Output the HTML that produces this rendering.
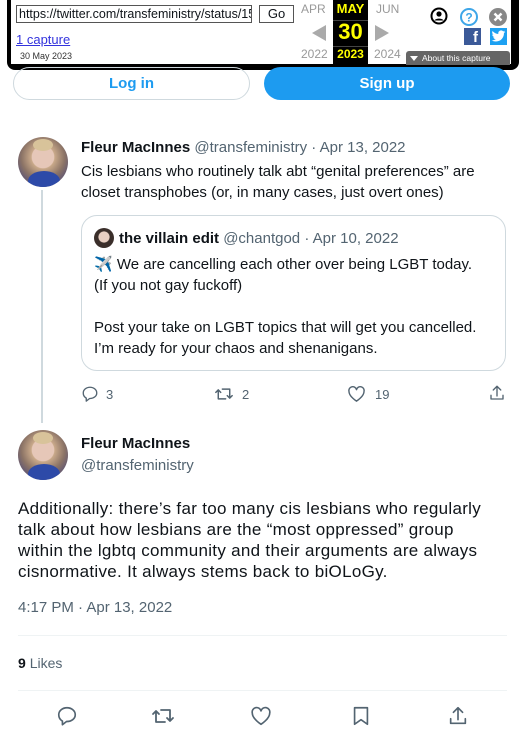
<!DOCTYPE html>
<html><head><meta charset="utf-8">
<style>
*{margin:0;padding:0;box-sizing:border-box}
body{width:525px;height:735px;background:#fff;font-family:"Liberation Sans",Arial,sans-serif;color:#0f1419;position:relative;overflow:hidden}
.a{position:absolute}
.g{color:#536471}
svg.i{position:absolute;fill:none;stroke:#536471;stroke-width:1.8;stroke-linecap:round;stroke-linejoin:round}
</style></head><body>

<div class="a" style="left:7px;top:-6px;width:512px;height:76px;background:#000;border-radius:0 0 8px 8px"></div>
<div class="a" style="left:11px;top:0;width:322px;height:64px;background:#fff"></div>
<div class="a" style="left:368px;top:0;width:143px;height:64px;background:#fff"></div>
<div class="a" style="left:333px;top:0;width:35px;height:64px;background:#000"></div>
<div class="a" style="left:16px;top:5px;width:236px;height:18px;border:1px solid #555;font-size:12.5px;line-height:16px;padding-left:2px;overflow:hidden;white-space:nowrap">https://twitter.com/transfeministry/status/15</div>
<div class="a" style="left:259px;top:5px;width:35px;height:18px;border:1px solid #555;font-size:13px;line-height:16px;text-align:center">Go</div>
<div class="a" style="left:16px;top:32px;font-size:13px;color:#3333dd;text-decoration:underline">1 capture</div>
<div class="a" style="left:20px;top:51px;font-size:9px;color:#333">30 May 2023</div>
<div class="a" style="left:301px;top:2px;font-size:12px;color:#999">APR</div>
<div class="a" style="left:301px;top:47px;font-size:12px;color:#999">2022</div>
<div class="a" style="left:312px;top:25px;width:0;height:0;border-top:8px solid transparent;border-bottom:8px solid transparent;border-right:14px solid #aaa"></div>
<div class="a" style="left:333px;top:1px;width:35px;text-align:center;font-size:13px;font-weight:bold;color:#ff0">MAY</div>
<div class="a" style="left:333px;top:19px;width:35px;text-align:center;font-size:22px;font-weight:bold;color:#ff0">30</div>
<div class="a" style="left:333px;top:47px;width:35px;text-align:center;font-size:12px;font-weight:bold;color:#ff0">2023</div>
<div class="a" style="left:333px;top:20px;width:35px;border-top:1px solid #444"></div>
<div class="a" style="left:333px;top:46px;width:35px;border-top:1px solid #444"></div>
<div class="a" style="left:376px;top:2px;font-size:12px;color:#999">JUN</div>
<div class="a" style="left:374px;top:47px;font-size:12px;color:#999">2024</div>
<div class="a" style="left:375px;top:25px;width:0;height:0;border-top:8px solid transparent;border-bottom:8px solid transparent;border-left:14px solid #aaa"></div>
<div class="a" style="left:406px;top:51px;width:104px;height:14px;background:#666;border-radius:3px 3px 0 0;color:#fff;font-size:8.5px;line-height:14px;padding-left:16px">About this capture</div>
<div class="a" style="left:410px;top:56px;width:0;height:0;border-left:4px solid transparent;border-right:4px solid transparent;border-top:5px solid #fff"></div>
<svg class="a" style="left:430px;top:7px" width="18" height="18" viewBox="0 0 18 18"><circle cx="9" cy="9" r="7.5" fill="#fff" stroke="#000" stroke-width="2"/><circle cx="9" cy="7" r="2.6" fill="#000"/><path d="M4.5 13.5c1-2.5 8-2.5 9 0" fill="#000"/></svg>
<svg class="a" style="left:459px;top:7px" width="20" height="20" viewBox="0 0 20 20"><circle cx="10" cy="10" r="8" fill="#fff" stroke="#3ea6e8" stroke-width="2"/><text x="10" y="14.5" font-size="12" font-weight="bold" text-anchor="middle" fill="#3ea6e8" font-family="Liberation Sans">?</text></svg>
<svg class="a" style="left:488px;top:7px" width="20" height="20" viewBox="0 0 20 20"><circle cx="10" cy="10" r="9" fill="#888"/><path d="M6.5 6.5l7 7M13.5 6.5l-7 7" stroke="#fff" stroke-width="2.5"/></svg>
<div class="a" style="left:464px;top:28px;width:17px;height:17px;background:#3b5998;color:#fff;font-weight:bold;font-size:15px;text-align:right;padding-right:3px;line-height:20px">f</div>
<div class="a" style="left:490px;top:28px;width:17px;height:17px;background:#1da1f2"></div>
<svg class="a" style="left:491px;top:30px" width="15" height="13" viewBox="0 0 24 20"><path d="M23 2.5c-.8.4-1.7.6-2.6.7.9-.6 1.6-1.4 2-2.5-.9.5-1.9.9-2.9 1.1A4.5 4.5 0 0 0 11.8 6 12.8 12.8 0 0 1 2.5 1.2a4.5 4.5 0 0 0 1.4 6c-.7 0-1.4-.2-2-.6 0 2.2 1.6 4 3.6 4.4-.7.2-1.4.2-2 .1.6 1.8 2.2 3.1 4.2 3.1A9 9 0 0 1 1 16.1 12.8 12.8 0 0 0 7.9 18c8.3 0 12.8-6.9 12.8-12.8v-.6c.9-.6 1.6-1.4 2.3-2.1z" fill="#fff"/></svg>

<div class="a" style="left:13px;top:67px;width:237px;height:33px;border:1px solid #cfd9de;border-radius:17px;text-align:center;line-height:31px;font-weight:bold;font-size:15px;color:#1d9bf0">Log in</div>
<div class="a" style="left:264px;top:67px;width:246px;height:33px;background:#1d9bf0;border-radius:17px;text-align:center;line-height:33px;font-weight:bold;font-size:15px;color:#fff">Sign up</div>

<div class="a" style="left:18px;top:137px;width:50px;height:50px;border-radius:50%;background:radial-gradient(circle at 50% 40%,#e6c7b8 0 28%,#c9a98a 30%,#8c7466 55%,#6b5e70 70%);overflow:hidden"><div style="position:absolute;left:10px;top:34px;width:32px;height:20px;border-radius:50% 50% 0 0;background:#2d4aa8"></div><div style="position:absolute;left:15px;top:2px;width:20px;height:12px;border-radius:50%;background:#d8c39a"></div></div>
<div class="a" style="left:41px;top:190px;width:2px;height:233px;background:#cfd9de"></div>
<div class="a" style="left:81px;top:139px;font-size:15px;white-space:nowrap"><b>Fleur MacInnes</b> <span class="g">@transfeministry · Apr 13, 2022</span></div>
<div class="a" style="left:81px;top:161px;width:420px;font-size:15px;line-height:21px">Cis lesbians who routinely talk abt “genital preferences” are closet transphobes (or, in many cases, just overt ones)</div>
<div class="a" style="left:81px;top:215px;width:425px;height:156px;border:1px solid #cfd9de;border-radius:16px"></div>
<div class="a" style="left:94px;top:228px;width:20px;height:20px;border-radius:50%;background:radial-gradient(circle at 50% 45%,#e8cfc2 0 35%,#3a2e2a 40%)"></div>
<div class="a" style="left:119px;top:230px;font-size:15px;white-space:nowrap"><b>the villain edit</b> <span class="g">@chantgod · Apr 10, 2022</span></div>
<div class="a" style="left:94px;top:254px;width:410px;font-size:15px;line-height:21px"><span style="color:#4aa3df">✈</span>️ We are cancelling each other over being LGBT today.<br>(If you not gay fuckoff)<br><br>Post your take on LGBT topics that will get you cancelled.<br>I’m ready for your chaos and shenanigans.</div>

<svg class="i" style="left:81px;top:385px" width="18" height="18" viewBox="0 0 24 24"><path d="M12 3c5 0 9 3.4 9 7.6 0 4.2-4 7.4-9 7.4h-.5L7 21.5v-4C4.5 16 3 13.5 3 10.6 3 6.4 7 3 12 3z"/></svg>
<div class="a g" style="left:106px;top:387px;font-size:13px">3</div>
<svg class="i" style="left:214px;top:385px" width="20" height="18" viewBox="0 0 24 22"><path d="M2 9l3-3 3 3M5 6v11h9M22 13l-3 3-3-3M19 16V5H10"/></svg>
<div class="a g" style="left:242px;top:387px;font-size:13px">2</div>
<svg class="i" style="left:347px;top:385px" width="19" height="18" viewBox="0 0 24 22"><path d="M12 20S2.5 14 2.5 7.8A4.8 4.8 0 0 1 12 5.5a4.8 4.8 0 0 1 9.5 2.3C21.5 14 12 20 12 20z"/></svg>
<div class="a g" style="left:375px;top:387px;font-size:13px">19</div>
<svg class="i" style="left:488px;top:384px" width="18" height="18" viewBox="0 0 24 24"><path d="M12 3v13M7 8l5-5 5 5M4 15v5h16v-5"/></svg>

<div class="a" style="left:18px;top:430px;width:50px;height:50px;border-radius:50%;background:radial-gradient(circle at 50% 40%,#e6c7b8 0 28%,#c9a98a 30%,#8c7466 55%,#6b5e70 70%);overflow:hidden"><div style="position:absolute;left:10px;top:34px;width:32px;height:20px;border-radius:50% 50% 0 0;background:#2d4aa8"></div><div style="position:absolute;left:15px;top:2px;width:20px;height:12px;border-radius:50%;background:#d8c39a"></div></div>
<div class="a" style="left:81px;top:435px;font-size:15px;font-weight:bold">Fleur MacInnes</div>
<div class="a g" style="left:81px;top:457px;font-size:15px">@transfeministry</div>
<div class="a" style="left:18px;top:498px;width:505px;font-size:17px;line-height:21px;letter-spacing:0.3px;white-space:nowrap">Additionally: there’s far too many cis lesbians who regularly<br>talk about how lesbians are the “most oppressed” group<br>within the lgbtq community and their arguments are always<br>cisnormative. It always stems back to biOLoGy.</div>
<div class="a g" style="left:18px;top:599px;font-size:15px">4:17 PM · Apr 13, 2022</div>
<div class="a" style="left:18px;top:635px;width:489px;border-top:1px solid #eff3f4"></div>
<div class="a" style="left:18px;top:655px;font-size:14px"><b>9</b> <span class="g">Likes</span></div>
<div class="a" style="left:18px;top:690px;width:489px;border-top:1px solid #eff3f4"></div>
<svg class="i" style="left:56px;top:705px" width="22" height="22" viewBox="0 0 24 24"><path d="M12 3c5 0 9 3.4 9 7.6 0 4.2-4 7.4-9 7.4h-.5L7 21.5v-4C4.5 16 3 13.5 3 10.6 3 6.4 7 3 12 3z"/></svg>
<svg class="i" style="left:151px;top:705px" width="24" height="22" viewBox="0 0 24 22"><path d="M2 9l3-3 3 3M5 6v11h9M22 13l-3 3-3-3M19 16V5H10"/></svg>
<svg class="i" style="left:250px;top:705px" width="22" height="22" viewBox="0 0 24 22"><path d="M12 20S2.5 14 2.5 7.8A4.8 4.8 0 0 1 12 5.5a4.8 4.8 0 0 1 9.5 2.3C21.5 14 12 20 12 20z"/></svg>
<svg class="i" style="left:350px;top:705px" width="22" height="22" viewBox="0 0 24 24"><path d="M5 3h14v18l-7-5-7 5z"/></svg>
<svg class="i" style="left:447px;top:705px" width="22" height="22" viewBox="0 0 24 24"><path d="M12 3v13M7 8l5-5 5 5M4 15v5h16v-5"/></svg>
</body></html>
